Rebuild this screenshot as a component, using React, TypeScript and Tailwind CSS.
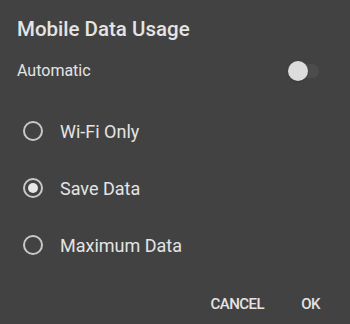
import { useState } from "react";

const options = ["Wi-Fi Only", "Save Data", "Maximum Data"];

function Radio({ checked }: { checked: boolean }) {
  return (
    <span className="grid h-5 w-5 shrink-0 place-items-center rounded-full border-2 border-[#c8c8c8]">
      {checked ? <span className="h-[10px] w-[10px] rounded-full bg-[#e6e6e6]" /> : null}
    </span>
  );
}

export default function App() {
  const [selected, setSelected] = useState("Save Data");
  const [auto, setAuto] = useState(false);

  return (
    <div
      className="flex h-[324px] w-[350px] flex-col bg-[#424242] text-[#e4e4e4]"
      style={{ fontFamily: "Roboto, 'Liberation Sans', sans-serif" }}
    >
      <h1 className="pl-[17px] pt-[17px] text-[20.5px] font-medium leading-6">Mobile Data Usage</h1>

      <div className="mt-[20px] flex items-center justify-between pl-[17px] pr-[31px]">
        <span className="text-[16px] leading-5">Automatic</span>
        <button type="button" onClick={() => setAuto(!auto)} className="relative h-5 w-[30px]">
          <span className="absolute right-0 top-[3px] h-[14px] w-[26px] rounded-full bg-[#4c4c4c]" />
          <span className="absolute left-[-1px] top-0 h-5 w-5 rounded-full bg-[#dcdcdc] shadow" />
        </button>
      </div>

      <div className="mt-[40px] flex flex-col gap-[37px] pl-[23px]">
        {options.map((label) => (
          <button
            key={label}
            type="button"
            onClick={() => setSelected(label)}
            className="flex h-5 items-center gap-[17px] text-left text-[18px]"
          >
            <Radio checked={selected === label} />
            <span>{label}</span>
          </button>
        ))}
      </div>

      <div className="mt-auto flex justify-end gap-[37px] pb-[9px] pr-[30px] text-[15px] font-medium tracking-[-0.5px]">
        <button type="button">CANCEL</button>
        <button type="button">OK</button>
      </div>
    </div>
  );
}
